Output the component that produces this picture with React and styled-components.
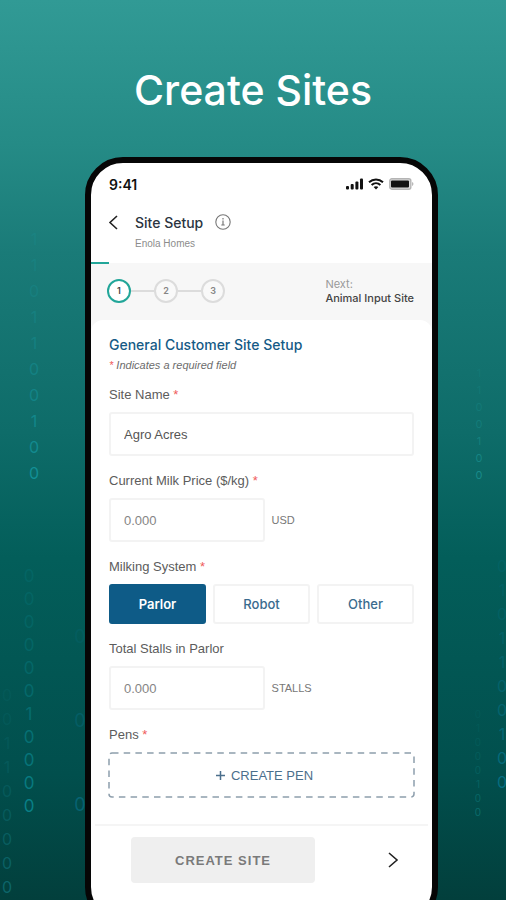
import React, { useState } from "react";
import styled, { createGlobalStyle } from "styled-components";

const GlobalStyle = createGlobalStyle`
  * {
    box-sizing: border-box;
  }
  body {
    margin: 0;
    font-family: "Liberation Sans", Arial, sans-serif;
  }
  button, input {
    font-family: inherit;
  }
`

const Page = styled.main`
  position: relative;
  display: flex;
  flex-direction: column;
  height: 100vh;
  overflow: hidden;
  background: linear-gradient(
    #319a95 0%,
    #258b86 16%,
    #1a7b78 28%,
    #0e6c69 48%,
    #035e5a 62%,
    #014f4d 86%,
    #023f3c 100%
  );
`

const Headline = styled.h1`
  margin: 0;
  padding: 66px 0 43px;
  font-family: Inter, sans-serif;
  font-size: 41px;
  line-height: 48px;
  font-weight: 500;
  text-align: center;
  color: #fff;
`

// falling binary digits behind the phone
const Stream = styled.div`
  position: absolute;
  top: ${props => props.$top}px;
  ${props => props.$side}: ${props => props.$offset}px;
  width: 20px;
  font-family: Inter, sans-serif;
  font-size: ${props => props.$size}px;
  line-height: ${props => props.$step}px;
  text-align: center;
  color: ${props => props.$color};
`
const Digit = styled.div``

const Phone = styled.div`
  position: relative;
  flex: none;
  display: flex;
  flex-direction: column;
  margin: 0 68px 0 85px;
  padding-bottom: 36px;
  border: 6px solid #060606;
  border-radius: 38px;
  background: #fff;
  overflow: hidden;
`

const StatusBar = styled.div`
  display: flex;
  align-items: center;
  justify-content: space-between;
  height: 42px;
  padding: 0 18px;
  color: #111;
`
const Time = styled.span`
  font-family: Inter, sans-serif;
  font-size: 14px;
  font-weight: 600;
`
const StatusIcons = styled.div`
  display: flex;
  align-items: center;
  gap: 5px;
`

const Header = styled.header`
  display: flex;
  align-items: flex-start;
  gap: 12px;
  height: 58px;
  padding: 7px 12px 0;
`
const IconButton = styled.button`
  display: flex;
  align-items: center;
  justify-content: center;
  width: ${props => props.$size}px;
  height: ${props => props.$size}px;
  padding: 0;
  border: 0;
  background: none;
  color: ${props => props.$color || "#222"};
`
const TitleRow = styled.div`
  display: flex;
  align-items: center;
  gap: 12px;
  height: 20px;
`
const Title = styled.h2`
  margin: 0;
  font-family: Inter, sans-serif;
  font-size: 14px;
  font-weight: 500;
  color: #2b3440;
`
const Customer = styled.p`
  margin: 6px 0 0;
  font-size: 10px;
  line-height: 12px;
  color: #8c8c8c;
`

const Progress = styled.div`
  width: 18px;
  height: 2px;
  margin-top: -1px;
  margin-bottom: -1px;
  z-index: 1;
  background: #22a699;
`
const StepBar = styled.div`
  display: flex;
  align-items: center;
  justify-content: space-between;
  height: 69px;
  padding: 0 18px 14px 16px;
  background: #f7f7f7;
`
const Steps = styled.ol`
  display: flex;
  align-items: center;
  margin: 0;
  padding: 0;
  list-style: none;
`
const Step = styled.li`
  display: flex;
  align-items: center;
  justify-content: center;
  width: 24px;
  height: 24px;
  border-radius: 50%;
  border: 2px solid ${props => (props.$active ? "#22a699" : "#dcdcdc")};
  background: ${props => (props.$active ? "#fff" : "#f9f9f9")};
  font-family: Inter, sans-serif;
  font-size: 9px;
  font-weight: 600;
  color: ${props => (props.$active ? "#444" : "#858585")};
`
const StepLine = styled.li`
  width: 23px;
  height: 2px;
  background: #dcdcdc;
`
const Next = styled.div`
  font-family: Inter, sans-serif;
  font-size: 11px;
  line-height: 14px;
  color: #999;
`
const NextName = styled.div`
  font-weight: 500;
  color: #444;
`

const Form = styled.form`
  display: flex;
  flex-direction: column;
  margin-top: -12px;
  padding: 15px 18px 26px;
  border-radius: 12px 12px 0 0;
  background: #fff;
`
const FormTitle = styled.h3`
  margin: 0;
  font-family: Inter, sans-serif;
  font-size: 14px;
  line-height: 20px;
  font-weight: 500;
  color: #155a86;
`
const Note = styled.p`
  margin: 2px 0 13px;
  font-size: 11px;
  line-height: 16px;
  font-style: italic;
  color: #6c6c6c;
`
const Star = styled.span`
  color: #ef5b5b;
`
const Field = styled.div`
  margin-bottom: ${props => (props.$last ? 0 : 16)}px;
`
const Label = styled.label`
  display: block;
  margin-bottom: 8px;
  font-size: 13px;
  line-height: 18px;
  color: #5c5c5c;
`
const InputRow = styled.div`
  display: flex;
  align-items: center;
  gap: 7px;
`
const Input = styled.input`
  width: ${props => (props.$short ? "51%" : "100%")};
  height: 44px;
  padding: 0 13px;
  border: 2px solid #f3f3f3;
  border-radius: 3px;
  background: #fff;
  font-size: 13px;
  color: #555;
  outline: none;

  &::placeholder {
    color: #858585;
    opacity: 1;
  }
`
const Unit = styled.span`
  font-size: 11px;
  color: #777;
`
const Choices = styled.div`
  display: grid;
  grid-template-columns: repeat(3, 1fr);
  gap: 7px;
`
const Choice = styled.button`
  height: 40px;
  padding: 0;
  border: 2px solid ${props => (props.$selected ? "#0e5b87" : "#f3f3f3")};
  border-radius: 3px;
  background: ${props => (props.$selected ? "#0e5b87" : "#fff")};
  font-family: Inter, sans-serif;
  font-size: 13px;
  line-height: 16px;
  font-weight: ${props => (props.$selected ? 600 : 500)};
  color: ${props => (props.$selected ? "#fff" : "#3a6b8e")};
`
const CreatePen = styled.button`
  position: relative;
  display: flex;
  align-items: center;
  justify-content: center;
  gap: 6px;
  width: 100%;
  height: 46px;
  padding: 0 0 0 6px;
  border: 0;
  background: none;
  font-size: 13px;
  color: #4b6f8c;
`
const Dashes = styled.svg`
  position: absolute;
  inset: 0;
  width: 100%;
  height: 100%;
  overflow: visible;
`

const Footer = styled.footer`
  display: flex;
  align-items: center;
  justify-content: space-between;
  margin: 0 4px;
  padding: 11px 25px 0 36px;
  border-top: 2px solid #f5f5f5;
`
const CreateSite = styled.button`
  width: 184px;
  height: 46px;
  border: 0;
  border-radius: 4px;
  background: #efefef;
  font-size: 13px;
  font-weight: 700;
  letter-spacing: 1px;
  color: #7a7a7a;
`

const streams = [
  { digits: "1101100100", top: 226, side: "left", offset: 24, size: 16, step: 26, color: "#17a2ad" },
  { digits: "00000010000", top: 565, side: "left", offset: 19, size: 17, step: 23, color: "#0d98a4" },
  { digits: "001100000", top: 683, side: "left", offset: -3, size: 16, step: 24, color: "#12777f" },
  { digits: "000", top: 595, side: "left", offset: 70, size: 18, step: 84, color: "#0a6f86" },
  { digits: "1100100", top: 365, side: "right", offset: 17, size: 11, step: 17, color: "#1f9c9c" },
  { digits: "0101100100", top: 554, side: "right", offset: -6, size: 16, step: 24, color: "#087d9a" },
  { digits: "01000100", top: 707, side: "right", offset: 18, size: 10, step: 14, color: "#0f7c7c" },
]

function DigitStream({ digits, top, side, offset, size, step, color }) {
  return (
    <Stream $top={top} $side={side} $offset={offset} $size={size} $step={step} $color={color} aria-hidden="true">
      {
        digits.split("").map((digit, i) => (
          <Digit key={i} style={{ opacity: 0.14 + 0.54 * ((i + 1) / digits.length) ** 2 }}>
            {digit}
          </Digit>
        ))
      }
    </Stream>
  )
}

const Chevron = ({ d, width }) => (
  <svg width={width} height="16" viewBox={`0 0 ${width} 16`} fill="none" stroke="currentColor" strokeWidth="1.6">
    <path d={d} />
  </svg>
)

function SignalIcon() {
  return (
    <svg width="17" height="12" viewBox="0 0 17 12" fill="#111">
      <rect x="0" y="8" width="3" height="3.5" rx="1" />
      <rect x="4.7" y="6" width="3" height="5.5" rx="1" />
      <rect x="9.4" y="3.5" width="3" height="8" rx="1" />
      <rect x="14" y="0.5" width="3" height="11" rx="1" />
    </svg>
  )
}

function WifiIcon() {
  return (
    <svg width="16" height="12" viewBox="0 0 16 12" fill="none" stroke="#111" strokeWidth="2">
      <path d="M1 4.3C5 0.6 11 0.6 15 4.3" />
      <path d="M3.6 7C6.2 4.6 9.8 4.6 12.4 7" />
      <path d="M8 11.5L5.6 9.1C7 8 9 8 10.4 9.1Z" fill="#111" stroke="none" />
    </svg>
  )
}

function BatteryIcon() {
  return (
    <svg width="25" height="12" viewBox="0 0 25 12">
      <rect x="0.8" y="0.8" width="21" height="10.4" rx="2" fill="#ddd" stroke="#b4b4b4" strokeWidth="1.4" />
      <rect x="2" y="2.5" width="18" height="7" rx="1" fill="#111" />
      <path d="M23.2 4v4c1.6-.7 1.6-3.3 0-4z" fill="#aaa" />
    </svg>
  )
}

function InfoIcon() {
  return (
    <svg width="16" height="16" viewBox="0 0 16 16" fill="none" stroke="currentColor">
      <circle cx="8" cy="8" r="7.2" strokeWidth="1.1" />
      <path d="M8 6.6V11M6.3 11h3.4M8 4v1.4" strokeWidth="1.2" />
    </svg>
  )
}

const systems = ["Parlor", "Robot", "Other"]

export default function App() {
  const [siteName, setSiteName] = useState("Agro Acres");
  const [system, setSystem] = useState("Parlor");

  return (
    <Page>
      <GlobalStyle />
      {streams.map((stream) => <DigitStream key={`${stream.side}${stream.top}`} {...stream} />)}
      <Headline>Create Sites</Headline>
      <Phone>
        <StatusBar>
          <Time>9:41</Time>
          <StatusIcons>
            <SignalIcon />
            <WifiIcon />
            <BatteryIcon />
          </StatusIcons>
        </StatusBar>
        <Header>
          <IconButton $size={20} aria-label="Back">
            <Chevron width={12} d="M10 2L3 8.5l7 6.5" />
          </IconButton>
          <div>
            <TitleRow>
              <Title>Site Setup</Title>
              <IconButton $size={16} $color="#777" aria-label="Info">
                <InfoIcon />
              </IconButton>
            </TitleRow>
            <Customer>Enola Homes</Customer>
          </div>
        </Header>
        <Progress />
        <StepBar>
          <Steps>
            <Step $active>1</Step>
            <StepLine />
            <Step>2</Step>
            <StepLine />
            <Step>3</Step>
          </Steps>
          <Next>
            Next:
            <NextName>Animal Input Site</NextName>
          </Next>
        </StepBar>
        <Form onSubmit={(e) => e.preventDefault()}>
          <FormTitle>General Customer Site Setup</FormTitle>
          <Note><Star>*</Star> Indicates a required field</Note>
          <Field>
            <Label htmlFor="site-name">Site Name <Star>*</Star></Label>
            <Input id="site-name" value={siteName} onChange={(e) => setSiteName(e.target.value)} />
          </Field>
          <Field>
            <Label htmlFor="milk-price">Current Milk Price ($/kg) <Star>*</Star></Label>
            <InputRow>
              <Input $short id="milk-price" placeholder="0.000" />
              <Unit>USD</Unit>
            </InputRow>
          </Field>
          <Field role="group" aria-labelledby="milking-system">
            <Label as="div" id="milking-system">Milking System <Star>*</Star></Label>
            <Choices>
              {systems.map((name) => (
                <Choice
                  key={name}
                  type="button"
                  $selected={name === system}
                  aria-pressed={name === system}
                  onClick={() => setSystem(name)}
                >
                  {name}
                </Choice>
              ))}
            </Choices>
          </Field>
          <Field>
            <Label htmlFor="stalls">Total Stalls in Parlor</Label>
            <InputRow>
              <Input $short id="stalls" placeholder="0.000" />
              <Unit>STALLS</Unit>
            </InputRow>
          </Field>
          <Field $last>
            <Label as="div">Pens <Star>*</Star></Label>
            <CreatePen type="button">
              <Dashes fill="none" stroke="#8d9eac" strokeWidth="1.5" strokeDasharray="6.5 5.2">
                <rect x="0" y="1" width="100%" height="44" rx="3" />
              </Dashes>
              <svg width="9" height="9" viewBox="0 0 9 9" stroke="currentColor" strokeWidth="1.5">
                <path d="M4.5 0v9M0 4.5h9" />
              </svg>
              CREATE PEN
            </CreatePen>
          </Field>
        </Form>
        <Footer>
          <CreateSite type="button">CREATE SITE</CreateSite>
          <IconButton $size={20} aria-label="Next step">
            <Chevron width={12} d="M2 1l8 7-8 7" />
          </IconButton>
        </Footer>
      </Phone>
    </Page>
  )
}
